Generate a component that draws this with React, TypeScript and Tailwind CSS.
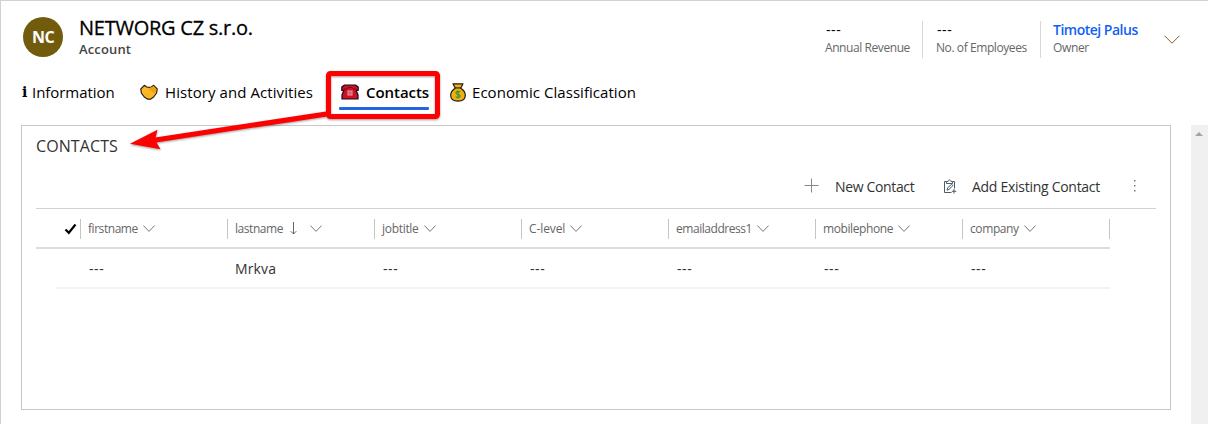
import React from "react";

const columns = [
  { label: "firstname", value: "---", w: "w-[51px]", track: "tracking-[-0.45px]", cell: "pl-px tracking-[0.6px]" },
  { label: "lastname", value: "Mrkva", w: "w-[49px]", track: "tracking-[-0.45px]", cell: "tracking-[0.15px]", sorted: true },
  { label: "jobtitle", value: "---", w: "w-[38px]", track: "tracking-[-0.3px]", cell: "pl-px tracking-[0.6px]" },
  { label: "C-level", value: "---", w: "w-[37px]", track: "tracking-[-0.1px]", cell: "pl-px tracking-[0.6px]" },
  { label: "emailaddress1", value: "---", w: "w-[77px]", track: "tracking-[-0.45px]", cell: "pl-px tracking-[0.6px]" },
  { label: "mobilephone", value: "---", w: "w-[71px]", track: "tracking-[-0.4px]", cell: "pl-px tracking-[0.6px]" },
  { label: "company", value: "---", w: "w-[50px]", track: "tracking-[-0.4px]", cell: "pl-px tracking-[0.6px]" },
];

function Chevron({ className }: { className: string }) {
  return (
    <svg viewBox="0 0 16 9" className={className} fill="none" stroke="currentColor" preserveAspectRatio="none">
      <path d="M.5.7 8 8.2 15.5.7" vectorEffect="non-scaling-stroke" />
    </svg>
  );
}

function Handshake() {
  return (
    <svg viewBox="0 0 18 16" className="h-4 w-[18px]">
      <path d="M4.300 1.300 6.800 3l2.200.4L11.300 3l2.400-1.700L17.200 5 16.600 9 13.600 13 10.500 15.200H7.700L4.300 13 1.400 9.200.8 5Z" fill="#fdb827" stroke="#2a2115" strokeWidth="1.2" strokeLinejoin="round" />
      <path d="m10 3.900 3.700-1.900 2.700 3.300-1.100 3.200-1.300.8-4.300-3.500-2.400.9Z" fill="#eda20d" />
      <path d="m5 9.500 3.500 3.500M7 8.500l3.500 3.800" fill="none" stroke="#e9a219" strokeWidth=".7" />
    </svg>
  );
}

function Telephone() {
  return (
    <svg viewBox="0 0 18 16" className="h-4 w-[18px]">
      <path d="M3.500 1h11l2.700 2v3.300h-2.200l2 4.500V15H1v-4.200l2-4.500H.8V3Z" fill="#ce1126" stroke="#180b0d" strokeWidth="1.200" strokeLinejoin="round" />
      <path d="M3 5h3l1-1.500h4L12 5h3" fill="none" stroke="#5d101b" strokeWidth=".9" />
      <path d="M6.500 6.500h5v5h-5z" fill="#f5b5bb" />
      <path d="M6.500 8.200h5M6.500 9.900h5M8.200 6.500v5M9.900 6.500v5" stroke="#c51a2e" strokeWidth=".5" />
    </svg>
  );
}

function MoneyBag() {
  return (
    <svg viewBox="0 0 16 19" className="h-[19px] w-4">
      <path d="M3 .8h10l-2.300 4.500c3 1.800 4.600 4.300 4.600 7 0 3.800-2.800 5.900-7.300 5.900S.7 16.100.7 12.300c0-2.700 1.600-5.200 4.600-7Z" fill="#f6ad13" stroke="#211b10" strokeWidth="1.200" strokeLinejoin="round" />
      <path d="M4.800 4.900h6.400" stroke="#33270e" strokeWidth="1.200" />
      <path d="M10.200 9.200C9.500 8.200 6 8 6 9.900c0 1.900 4.200 1.100 4.200 3.100 0 1.900-3.500 1.700-4.400.6M8 7.200v8.600" fill="none" stroke="#28a032" strokeWidth="1.200" />
    </svg>
  );
}

function ClipboardEdit() {
  return (
    <svg viewBox="0 0 14 15" className="h-[15px] w-[14px]" fill="none" stroke="#4a5b6c" strokeWidth="1">
      <path d="M8.500 13.500h-7v-11h2M9.500 2.500h2v7M3.500 4.500v-2h1.500c0-2 3-2 3 0h1.500v2ZM11 10v4.500M8.800 12.300h4.500" />
      <path d="m4 11.200.7-2.500 4-3.500 1.300 1.300-4 3.900Z" />
    </svg>
  );
}

function Stat({ label, value, className }: { label: string; value: string; className: string }) {
  return (
    <div className={`h-[37px] shrink-0 whitespace-nowrap ${className}`}>
      <div className="h-[18px] pl-px text-sm leading-[17px] tracking-[0.6px] text-black">{value}</div>
      <div className="text-xs leading-[17px] tracking-[-0.42px] text-[#666]">{label}</div>
    </div>
  );
}

export default function App() {
  return (
    <div className="relative h-[424px] w-[1208px] overflow-hidden border-t border-l border-[#d2d2d2] bg-white font-['Open_Sans','Noto_Sans',sans-serif] text-black">
      <header className="flex h-[76px] items-start whitespace-nowrap pl-[22px]">
        <div className="mt-4 flex size-10 shrink-0 items-center justify-center rounded-full bg-[#735b0d] text-base font-bold tracking-[-0.6px] text-white">NC</div>
        <div className="mt-[13px] ml-4 w-[746px] shrink-0">
          <h1 className="text-[20px] leading-7 font-[500] tracking-[-0.25px] [-webkit-text-stroke:0.3px_black]">NETWORG CZ s.r.o.</h1>
          <div className="text-[13px] leading-[15px] font-semibold tracking-[0.15px] text-[#444]">Account</div>
        </div>
        <div className="mt-5 flex shrink-0">
          <Stat value="---" label="Annual Revenue" className="w-[97px]" />
          <Stat value="---" label="No. of Employees" className="w-[118px] border-l border-[#d8d8d8] pl-[13px]" />
          <div className="h-[37px] w-[124px] border-l border-[#d8d8d8] pl-3">
            <div className="h-[18px] text-sm leading-[17px] font-semibold tracking-[-0.5px] text-[#1160f7]">Timotej Palus</div>
            <div className="text-xs leading-[17px] tracking-[-0.35px] text-[#666]">Owner</div>
          </div>
        </div>
        <Chevron className="mt-[34px] h-[9px] w-4 shrink-0 text-[#8a5a28]" />
      </header>

      <nav className="flex h-12 whitespace-nowrap pl-[21px] text-[15px] leading-[30px]">
        <div className="flex w-[118px]">
          <span className="w-[10px] font-['DejaVu_Serif',serif] text-[14px] font-bold">i</span>
          <span className="tracking-[-0.05px]">Information</span>
        </div>
        <div className="flex w-[201px]">
          <span className="mt-[7px] w-[25px]"><Handshake /></span>
          <span className="tracking-[0.08px]">History and Activities</span>
        </div>
        <div className="flex w-[109px]">
          <span className="mt-[7px] w-[25px]"><Telephone /></span>
          <span className="font-semibold tracking-[-0.05px]">Contacts</span>
        </div>
        <div className="flex">
          <span className="mt-[6px] w-[22px]"><MoneyBag /></span>
          <span className="tracking-[0.05px]">Economic Classification</span>
        </div>
      </nav>

      <div className="flex">
        <section className="ml-5 h-[285px] w-[1150px] border border-[#c8c8c8] pl-[14px]">
          <h2 className="h-[42px] pt-[9px] text-base leading-[22px] tracking-[0.1px] text-[#333]">CONTACTS</h2>
          <div className="flex h-[41px] w-[1120px] whitespace-nowrap border-b border-[#d2d2d2] pl-[768px] text-sm leading-[38px] text-[#333]">
            <svg viewBox="0 0 15 15" className="mt-[10px] mr-4 h-[15px] w-[15px] shrink-0" stroke="#888"><path d="M7.500.5v14M.5 7.500h14" /></svg>
            <span className="w-[108px] shrink-0 tracking-[-0.35px]">New Contact</span>
            <span className="mt-[11px] w-[29px] shrink-0"><ClipboardEdit /></span>
            <span className="w-[161px] shrink-0 tracking-[-0.28px]">Add Existing Contact</span>
            <svg viewBox="0 0 4 14" className="mt-3 h-[14px] w-1 shrink-0" fill="#777"><path d="M1 0h1.500v1.500H1ZM1 5h1.500v1.500H1ZM1 10h1.500v1.500H1Z" /></svg>
          </div>
          <div className="flex h-10 w-[1074px] border-b-2 border-[#ddd] pt-[10px]">
            <div className="w-[44px] shrink-0 pt-1 pl-7">
              <svg viewBox="0 0 13 12" className="h-3 w-[13px]" fill="none" stroke="black" strokeWidth="2.200"><path d="m1.500 6.500 3.300 3.300L11.500 1.500" /></svg>
            </div>
            {columns.map((c) => (
              <div key={c.label} className="flex h-5 w-[147px] shrink-0 border-l border-[#c4c4c4] pl-[7px] text-xs leading-5 text-[#666]">
                <span className={`${c.w} ${c.track} shrink-0 whitespace-nowrap`}>{c.label}</span>
                {c.sorted && (
                  <svg viewBox="0 0 7 13" className="mt-[3px] ml-[6px] mr-[9px] h-[13px] w-[7px] shrink-0" fill="none" stroke="#666"><path d="M3.500 0v12M.7 9.200l2.800 2.800 2.800-2.800" /></svg>
                )}
                <Chevron className="mt-1.5 ml-[4px] h-[7px] w-3 shrink-0 text-[#757575]" />
              </div>
            ))}
            <div className="h-5 shrink-0 border-l border-[#c4c4c4]" />
          </div>
          <div className="ml-5 flex h-10 w-[1054px] border-b-2 border-[#f3f3f3] pl-8 text-sm leading-[39px] text-[#333]">
            {columns.map((c) => <div key={c.label} className={`w-[147px] shrink-0 ${c.cell}`}>{c.value}</div>)}
          </div>
        </section>
        <div className="ml-5 h-[300px] w-[17px] bg-[#f0f0f0] pt-[7px] pl-1">
          <svg viewBox="0 0 8 4" className="h-1 w-2" fill="#a3a3a3"><path d="m4 0 4 4H0Z" /></svg>
        </div>
      </div>

      <svg className="absolute -top-px -left-px h-[424px] w-[1208px]" viewBox="0 0 1208 424">
        <rect x="339" y="107" width="90" height="3" rx="1" fill="#2266e3" />
        <g style={{ filter: "drop-shadow(0 1px 1px rgba(0,0,0,.4))" }}>
          <rect x="328.500" y="73.500" width="109" height="43" rx="2" fill="none" stroke="#f00" strokeWidth="5" />
          <path d="M328 113.700 154 140.300" stroke="#f00" strokeWidth="5" />
          <path d="m130 143.700 27.500-14L155 140l5.500 9.200Z" fill="#f00" />
        </g>
      </svg>
    </div>
  );
}
